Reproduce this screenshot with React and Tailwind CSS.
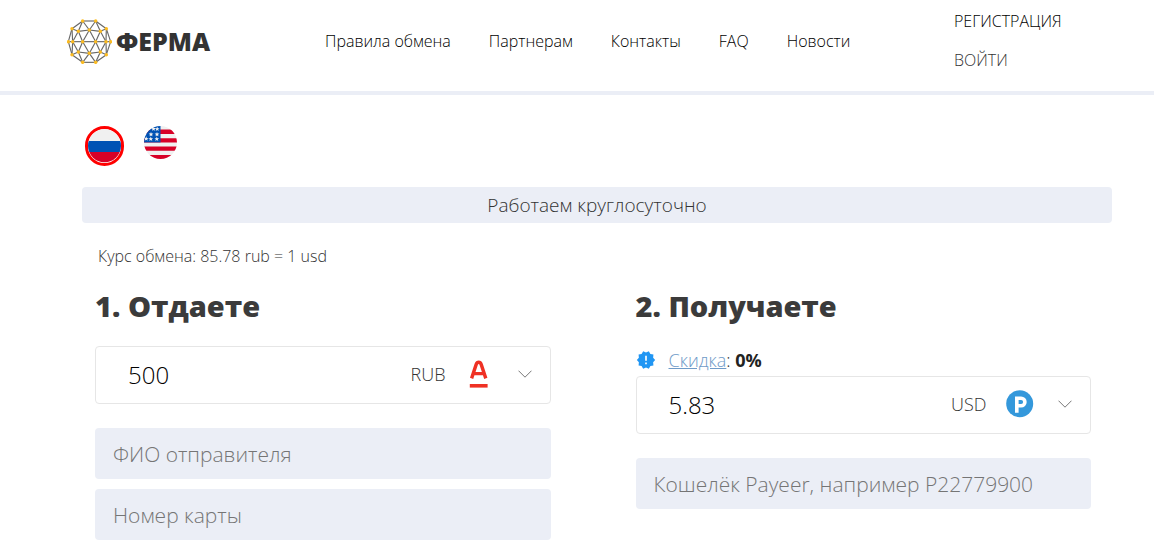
import React, { useState } from "react";

const NAV = ["Правила обмена", "Партнерам", "Контакты", "FAQ", "Новости"];

const NODES = [
  [47, 6], [86, 6], [15, 29], [118, 29], [34, 37], [100, 37], [67, 33],
  [4, 68], [17, 68], [47, 68], [86, 68], [117, 68], [131, 68],
  [15, 107], [118, 107], [34, 99], [100, 99], [67, 103], [47, 130], [86, 130],
];

const EDGES = [
  [0, 1], [0, 2], [1, 3], [0, 4], [0, 6], [1, 6], [1, 5], [2, 4], [4, 6], [6, 5], [5, 3],
  [2, 7], [2, 8], [4, 8], [4, 9], [6, 9], [6, 10], [5, 10], [5, 11], [3, 11], [3, 12],
  [7, 8], [8, 9], [9, 10], [10, 11], [11, 12],
  [7, 13], [8, 13], [8, 15], [9, 15], [9, 17], [10, 17], [10, 16], [11, 16], [11, 14], [12, 14],
  [13, 15], [15, 17], [17, 16], [16, 14], [13, 18], [15, 18], [17, 18], [17, 19], [16, 19], [14, 19], [18, 19],
];

function Globe() {
  return (
    <svg viewBox="0 0 135 135" className="size-[45px] shrink-0" aria-hidden="true">
      <g stroke="#666" strokeWidth="3.4">
        {EDGES.map(([a, b]) => (
          <line key={`${a}-${b}`} x1={NODES[a][0]} y1={NODES[a][1]} x2={NODES[b][0]} y2={NODES[b][1]} />
        ))}
      </g>
      <g fill="#fbbb21">
        {NODES.map(([x, y]) => (
          <circle key={`${x}-${y}`} cx={x} cy={y} r="5.2" />
        ))}
      </g>
    </svg>
  );
}

function RussiaFlag() {
  return (
    <svg viewBox="0 0 33 34" className="h-[34px] w-[33px]" aria-hidden="true">
      <clipPath id="ru"><circle cx="16.5" cy="16.8" r="16.5" /></clipPath>
      <g clipPath="url(#ru)">
        <rect width="34" height="34" fill="#f0f0f0" />
        <rect y="12" width="34" height="11" fill="#0052b4" />
        <rect y="23" width="34" height="11" fill="#d80027" />
      </g>
    </svg>
  );
}

const STARS = [[9.5, 2.8], [13.2, 3], [7, 8.3], [13, 8.3], [6.8, 13], [12.8, 13], [2.2, 12.6]];

function UsaFlag() {
  return (
    <svg viewBox="0 0 33 33" className="size-[33px]" aria-hidden="true">
      <clipPath id="us"><circle cx="16.5" cy="16.5" r="16.5" /></clipPath>
      <g clipPath="url(#us)">
        <rect width="33" height="33" fill="#f0f0f0" />
        <path d="M0 3.6h33v4.3H0zM0 12.2h33v4.2H0zM0 20.6h33v4.2H0zM0 29h33v4H0z" fill="#d80027" />
        <rect width="16.5" height="16.4" fill="#0052b4" />
        {STARS.map(([x, y]) => (
          <path
            key={`${x}-${y}`}
            transform={`translate(${x} ${y}) scale(1.2)`}
            d="M0-2 .55-.6 2-.6.85.3 1.25 1.7 0 .9-1.25 1.7-.85.3-2-.6-.55-.6Z"
            fill="#f0f0f0"
          />
        ))}
      </g>
    </svg>
  );
}

function AlfaIcon() {
  return (
    <svg viewBox="0 0 28 28" className="size-7" aria-hidden="true">
      <path d="M5.6 18.4 10.2 4.4Q11 2.2 12.7 2.2T15.2 4.4L19.8 18.4M8 13.6h9.6" fill="none" stroke="#ef3124" strokeWidth="3.4" strokeLinejoin="round" />
      <rect x="3.8" y="24" width="17.8" height="3.6" fill="#ef3124" />
    </svg>
  );
}

function PayeerIcon() {
  return (
    <svg viewBox="0 0 28 28" className="size-7" aria-hidden="true">
      <circle cx="13.7" cy="13.7" r="13.5" fill="#3498db" />
      <path d="M10.8 22.8V8.2h4.3a3.8 3.8 0 0 1 0 7.6h-4.3" fill="none" stroke="#fff" strokeWidth="3.6" />
    </svg>
  );
}

function Chevron() {
  return (
    <svg viewBox="0 0 14 8" className="h-2 w-3.5" aria-hidden="true">
      <path d="M.5.7 7 7.2 13.5.7" fill="none" stroke="#777" strokeWidth="1" />
    </svg>
  );
}

function SaleBadge() {
  return (
    <svg viewBox="0 0 24 24" className="size-5" aria-hidden="true">
      <path
        fill="#2196f3"
        d="M23 12l-2.44-2.78.34-3.68-3.61-.82-1.89-3.18L12 3 8.6 1.54 6.71 4.72l-3.61.81.34 3.68L1 12l2.44 2.78-.34 3.69 3.61.82 1.89 3.18L12 21l3.4 1.46 1.89-3.18 3.61-.82-.34-3.68L23 12zm-10 5h-2v-2h2v2zm0-4h-2V7h2v6z"
      />
    </svg>
  );
}

function AmountBox({ labelledBy, value, currency, icon }) {
  const [amount, setAmount] = useState(value);
  return (
    <div className="flex h-[58px] items-center rounded border border-[#e6e6e6] bg-white pb-0.5">
      <input
        aria-labelledby={labelledBy}
        value={amount}
        onChange={(e) => setAmount(e.target.value)}
        className="h-full min-w-0 flex-1 bg-transparent pl-8 text-2xl font-light text-black outline-none"
      />
      <div className="grid w-[139px] items-center">
        <select
          aria-labelledby={labelledBy}
          className="col-start-1 row-start-1 h-12 w-full appearance-none bg-transparent text-lg font-light outline-none"
        >
          <option>{currency}</option>
        </select>
        <div className="pointer-events-none col-start-1 row-start-1 mr-[18px] flex items-center gap-6 justify-self-end">
          {icon}
          <Chevron />
        </div>
      </div>
    </div>
  );
}

function Field({ label }) {
  return (
    <input
      aria-label={label}
      placeholder={label}
      className="block h-[51px] w-full rounded bg-[#ebeef6] px-[18px] text-[21px] font-light placeholder:text-[#757575] outline-none"
    />
  );
}

export default function App() {
  return (
    <div className="bg-white font-['Open_Sans','Noto_Sans',sans-serif] font-light text-[#333]">
      <header className="flex h-[95px] items-start border-b-4 border-[#ebeef6] pl-[67px]">
        <a href="#" className="mt-[19px] flex w-[144px] items-center gap-1">
          <Globe />
          <span className="text-[25px] font-extrabold text-[#333]">ФЕРМА</span>
        </a>
        <nav className="ml-[114px] mt-[29px] flex gap-[38px] whitespace-nowrap text-base text-black">
          {NAV.map((item) => (
            <a key={item} href="#">{item}</a>
          ))}
        </nav>
        <div className="ml-auto mr-[83px] mt-[9px] flex w-[117px] flex-col gap-[15px] text-base">
          <a href="#" className="text-black">РЕГИСТРАЦИЯ</a>
          <a href="#">ВОЙТИ</a>
        </div>
      </header>

      <main className="pb-2 pl-[82px] pr-[42px] pt-[31px]">
        <div className="flex h-10 items-start gap-5 pl-[3px]">
          <button type="button" aria-label="Русский" className="rounded-full border-[3px] border-[#f00]">
            <RussiaFlag />
          </button>
          <button type="button" aria-label="English">
            <UsaFlag />
          </button>
        </div>

        <p className="mt-[21px] rounded bg-[#ebeef6] text-center text-[19px] leading-9">Работаем круглосуточно</p>
        <p className="mt-[21px] pl-4 text-base">Курс обмена: 85.78 rub = 1 usd</p>

        <form className="grid grid-cols-2 gap-[85px] pl-[13px] pr-[21px] pt-5">
          <section>
            <h2 id="give" className="text-[29px] font-extrabold leading-9 text-[#3b3b3b]">1. Отдаете</h2>
            <div className="mt-[22px]">
              <AmountBox labelledBy="give" value="500" currency="RUB" icon={<AlfaIcon />} />
            </div>
            <div className="mt-6 grid gap-2.5">
              <Field label="ФИО отправителя" />
              <Field label="Номер карты" />
            </div>
          </section>

          <section>
            <h2 id="get" className="text-[29px] font-extrabold leading-9 text-[#3b3b3b]">2. Получаете</h2>
            <div className="mt-5 flex h-8 items-center gap-[13px] text-lg">
              <SaleBadge />
              <p>
                <a href="#" className="text-[#6f9bc8] underline">Скидка</a>: <b className="font-bold text-[#222]">0%</b>
              </p>
            </div>
            <AmountBox labelledBy="get" value="5.83" currency="USD" icon={<PayeerIcon />} />
            <div className="mt-6">
              <Field label="Кошелёк Payeer, например P22779900" />
            </div>
          </section>
        </form>
      </main>
    </div>
  );
}
